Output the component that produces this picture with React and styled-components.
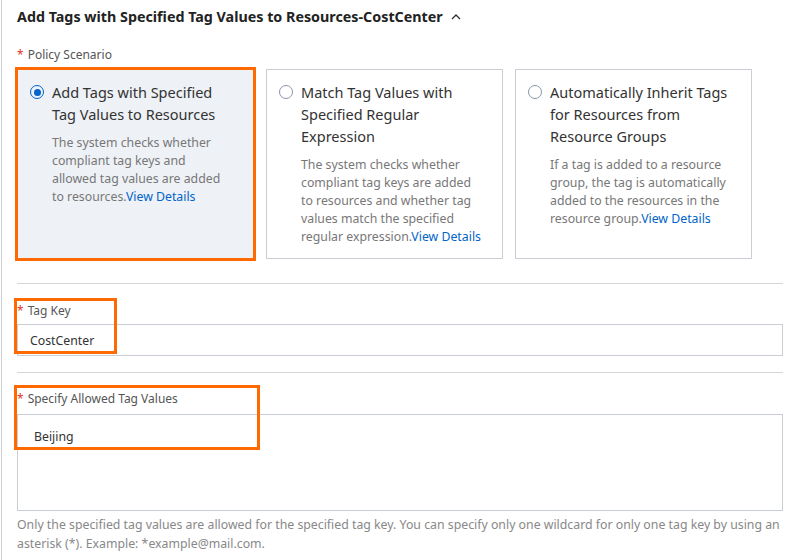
import React from "react";
import styled, { createGlobalStyle } from "styled-components";

const GlobalStyle = createGlobalStyle`
  html, body {
    margin: 0;
    padding: 0;
    background: #fff;
  }
  body {
    font-family: "Noto Sans", "Open Sans", sans-serif;
    color: #333;
  }
`;

const Page = styled.div`
  margin-left: 1px;
  border-left: 1px solid #cdd1d7;
  padding: 7px 14px 0 15px;
  min-height: 560px;
  box-sizing: border-box;
`;

const Title = styled.h3`
  display: flex;
  align-items: center;
  gap: 7px;
  margin: 0;
  font-size: 14.3px;
  line-height: 20px;
  font-weight: 700;
  color: #222;
`;

const Label = styled.div`
  font-size: 12px;
  line-height: 18px;
  color: #555;
  margin-top: ${(p) => p.$top || 0}px;

  &::before {
    content: "*";
    color: #e0352b;
    margin-right: 4px;
  }
`;

const CardRow = styled.div`
  display: grid;
  grid-template-columns: repeat(3, 237px);
  column-gap: 12px;
  margin-top: 5px;
`;

const Card = styled.div`
  position: relative;
  height: 190px;
  box-sizing: border-box;
  border: 1px solid #c9cdd4;
  background: ${(p) => (p.$selected ? "#eef1f6" : "#fff")};
  padding: 11px 20px 0 12px;
  display: flex;
  gap: 8px;
  ${(p) => p.$selected && "outline: 3px solid #ff6a00; outline-offset: -1px;"}
`;

const Radio = styled.span`
  flex: none;
  width: 14px;
  height: 14px;
  margin-top: 4px;
  box-sizing: border-box;
  border-radius: 50%;
  border: 1.5px solid ${(p) => (p.$checked ? "#0064c8" : "#8b95a5")};
  display: flex;
  align-items: center;
  justify-content: center;

  &::after {
    content: "";
    width: 7px;
    height: 7px;
    border-radius: 50%;
    background: ${(p) => (p.$checked ? "#0064c8" : "transparent")};
  }
`;

const CardBody = styled.div`
  flex: 1;
`;

const CardTitle = styled.div`
  font-size: 14.5px;
  line-height: 22px;
  color: #333;
`;

const CardDesc = styled.div`
  margin-top: 9px;
  font-size: 12.3px;
  line-height: 18px;
  color: #777;
`;

const Link = styled.a`
  color: #0064c8;
  text-decoration: none;
`;

const Divider = styled.hr`
  border: none;
  border-top: 1px solid #d3d6db;
  margin: ${(p) => p.$top}px 0 0;
`;

const Field = styled.div`
  position: relative;
  margin-top: ${(p) => p.$top}px;
`;

const Input = styled.div`
  margin-top: 4px;
  height: 32px;
  box-sizing: border-box;
  border: 1px solid #c9cdd4;
  padding: 0 12px;
  display: flex;
  align-items: center;
  font-size: 12.3px;
  color: #333;
`;

const TextArea = styled.div`
  margin-top: 6px;
  height: 97px;
  box-sizing: border-box;
  border: 1px solid #c9cdd4;
  padding: 12px 16px;
  font-size: 12.3px;
  line-height: 20px;
  color: #333;
`;

const Help = styled.p`
  margin: 4px 0 0;
  font-size: 12.3px;
  line-height: 19px;
  color: #888;
`;

const Highlight = styled.div`
  position: absolute;
  left: -3px;
  top: ${(p) => p.$top}px;
  width: ${(p) => p.$w}px;
  height: ${(p) => p.$h}px;
  box-sizing: border-box;
  border: 3px solid #ff6a00;
  pointer-events: none;
`;

const scenarios = [
  {
    title: "Add Tags with Specified Tag Values to Resources",
    desc: "The system checks whether compliant tag keys and allowed tag values are added to resources.",
    selected: true,
  },
  {
    title: "Match Tag Values with Specified Regular Expression",
    desc: "The system checks whether compliant tag keys are added to resources and whether tag values match the specified regular expression.",
  },
  {
    title: "Automatically Inherit Tags for Resources from Resource Groups",
    desc: "If a tag is added to a resource group, the tag is automatically added to the resources in the resource group.",
  },
];

const ChevronUp = () => (
  <svg width="12" height="12" viewBox="0 0 12 12" fill="none">
    <polyline points="2,8 6,4 10,8" stroke="#333" strokeWidth="1.3" />
  </svg>
);

export default function App() {
  return (
    <>
      <GlobalStyle />
      <Page>
        <Title>
          Add Tags with Specified Tag Values to Resources-CostCenter
          <ChevronUp />
        </Title>

        <Label $top={19}>Policy Scenario</Label>
        <CardRow>
          {scenarios.map((s) => (
            <Card key={s.title} $selected={s.selected}>
              <Radio $checked={s.selected} />
              <CardBody>
                <CardTitle>{s.title}</CardTitle>
                <CardDesc>
                  {s.desc}
                  <Link href="#">View Details</Link>
                </CardDesc>
              </CardBody>
            </Card>
          ))}
        </CardRow>

        <Divider $top={24} />

        <Field $top={18}>
          <Label>Tag Key</Label>
          <Input>CostCenter</Input>
          <Highlight $top={-4} $w={103} $h={56} />
        </Field>

        <Divider $top={16} />

        <Field $top={17}>
          <Label>Specify Allowed Tag Values</Label>
          <TextArea>Beijing</TextArea>
          <Highlight $top={-5} $w={246} $h={65} />
        </Field>
        <Help>
          Only the specified tag values are allowed for the specified tag key. You can specify only one
          wildcard for only one tag key by using an asterisk (*). Example: *example@mail.com.
        </Help>
      </Page>
    </>
  );
}
